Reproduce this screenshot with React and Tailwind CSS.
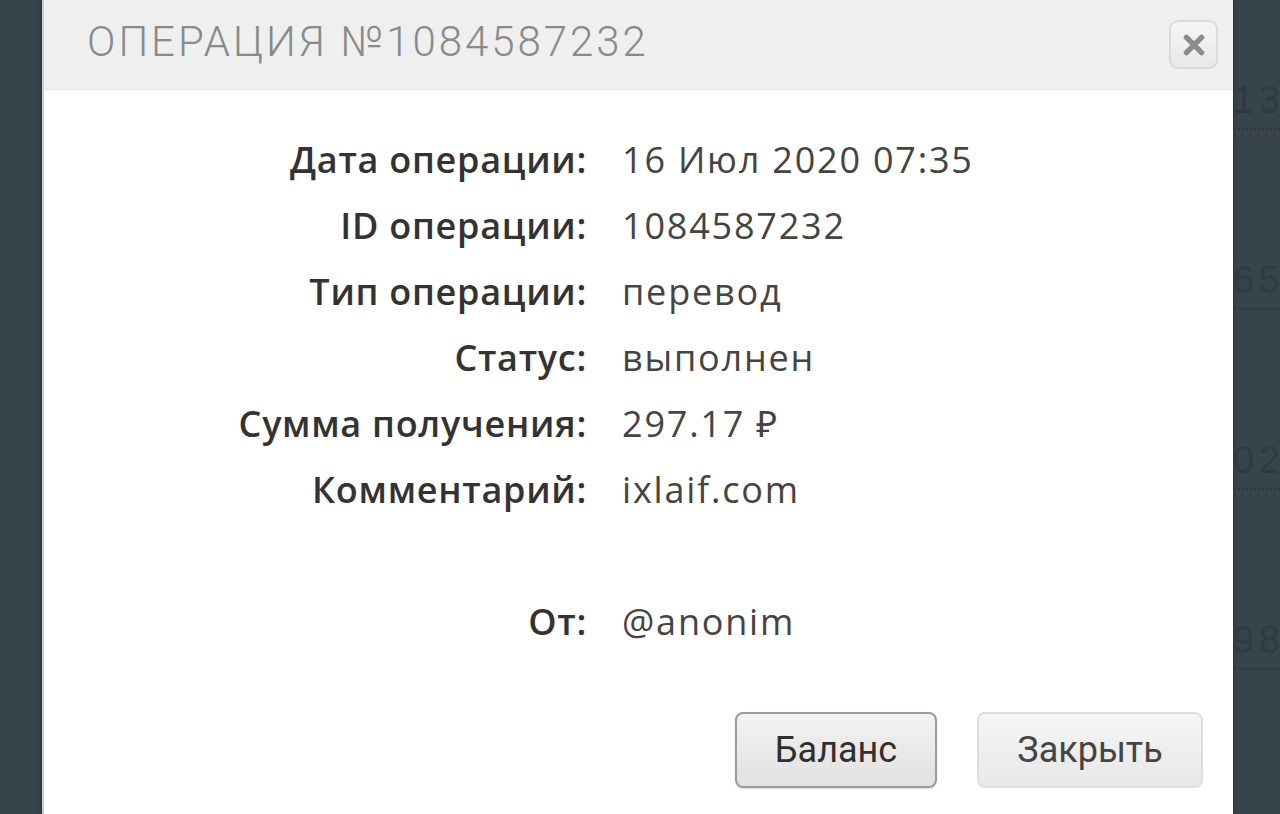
import React from "react";

const rows = [
  ["Дата операции:", "16 Июл 2020 07:35"],
  ["ID операции:", "1084587232"],
  ["Тип операции:", "перевод"],
  ["Статус:", "выполнен"],
  ["Сумма получения:", "297.17 ₽"],
  ["Комментарий:", "ixlaif.com"],
  ["", ""],
  ["От:", "@anonim"],
];

const bgNums = ["135", "654", "029", "988"];

const App = () => {
  return (
    <div className="h-[814px] w-[1280px] overflow-hidden bg-[#37444c] flex">
      {/* left backdrop */}
      <div className="w-[42px] shrink-0" />

      {/* modal */}
      <div className="w-[1191px] shrink-0 bg-white flex flex-col border-l-2 border-[#c9cdd0] shadow-[0_0_4px_rgba(0,0,0,0.4)]">
        <div className="h-[90px] bg-[#efefef] border-b border-[#e6e6e6] flex items-center justify-between pl-[43px] pr-[15px]">
          <h1
            className="text-[42px] font-light tracking-[0.07em] text-[#8a8a8a] leading-none -mt-[6px]"
            style={{ fontFamily: "Roboto, 'Liberation Sans', sans-serif" }}
          >
            ОПЕРАЦИЯ №1084587232
          </h1>
          <button className="w-[49px] h-[49px] rounded-[9px] border-2 border-[#dadada] bg-gradient-to-b from-[#f6f6f6] to-[#e8e8e8] flex items-center justify-center">
            <svg width="26" height="26" viewBox="0 0 24 24">
              <path d="M5 5 L19 19 M19 5 L5 19" stroke="#8c8c8c" strokeWidth="5" strokeLinecap="round" />
            </svg>
          </button>
        </div>

        <div
          className="pt-[37px] grid grid-cols-[543px_1fr] gap-x-[35px]"
          style={{ fontFamily: "'Open Sans', 'Noto Sans', sans-serif" }}
        >
          {rows.map(([label, value], i) => (
            <React.Fragment key={i}>
              <div className="h-[66px] flex items-center justify-end text-[36px] tracking-[0.02em] font-semibold text-[#333]">
                {label}
              </div>
              <div className="h-[66px] flex items-center text-[36px] tracking-[0.05em] text-[#444]">
                {value}
              </div>
            </React.Fragment>
          ))}
        </div>

        <div
          className="mt-[57px] flex justify-end gap-[40px] pr-[30px]"
          style={{ fontFamily: "Roboto, 'Liberation Sans', sans-serif" }}
        >
          <button className="w-[202px] h-[76px] rounded-[8px] border-2 border-[#9c9c9c] bg-gradient-to-b from-[#f3f3f3] via-[#e9e9e9] to-[#e2e2e2] text-[36px] text-[#2f2f2f] shadow-[0_1px_2px_rgba(0,0,0,0.15)]">
            Баланс
          </button>
          <button className="w-[226px] h-[76px] rounded-[8px] border-2 border-[#dedede] bg-gradient-to-b from-[#f6f6f6] via-[#eeeeee] to-[#e8e8e8] text-[36px] text-[#444]">
            Закрыть
          </button>
        </div>
      </div>

      {/* right backdrop with faded list */}
      <div className="flex-1 overflow-hidden pt-[78px] flex flex-col gap-[128px]">
        {bgNums.map((n) => (
          <div key={n} className="flex flex-col">
            <span
              className="text-[38px] leading-[44px] tracking-[0.12em] text-[#2f3a41] whitespace-nowrap"
              style={{ fontFamily: "'Liberation Sans', sans-serif" }}
            >
              {n}
            </span>
            <div className="mt-[6px] border-b-2 border-dotted border-[#2b353b]" />
          </div>
        ))}
      </div>
    </div>
  );
};

export default App;
